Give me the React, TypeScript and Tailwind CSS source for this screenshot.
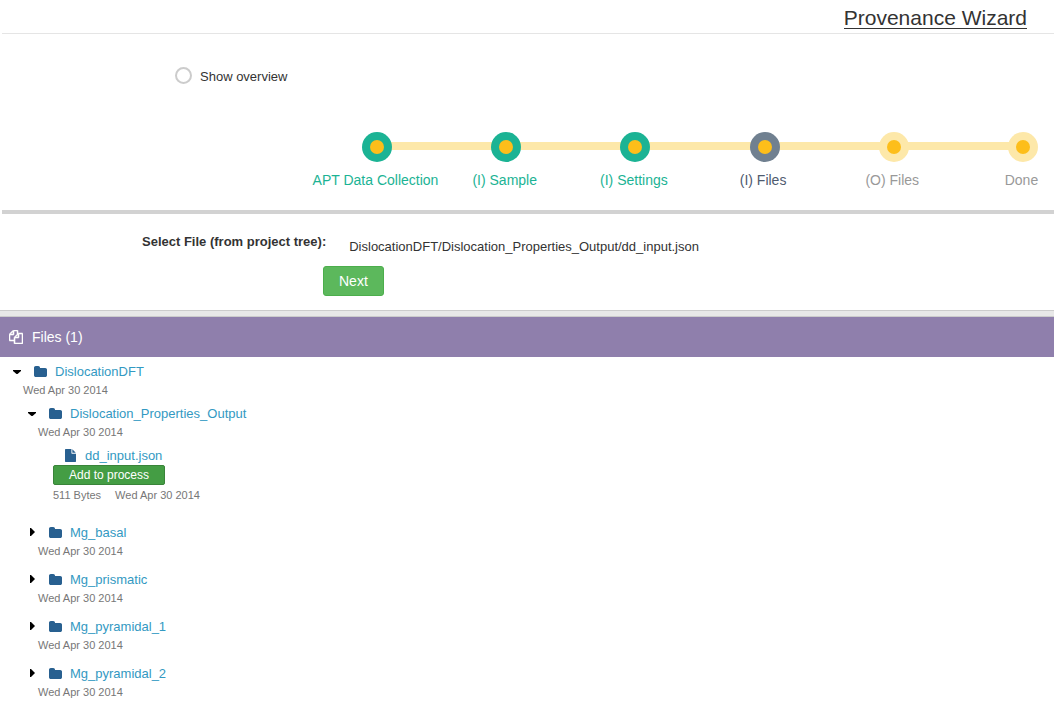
import { useState } from "react";

type StepState = "done" | "current" | "pending";

const steps: { label: string; state: StepState }[] = [
  { label: "APT Data Collection", state: "done" },
  { label: "(I) Sample", state: "done" },
  { label: "(I) Settings", state: "done" },
  { label: "(I) Files", state: "current" },
  { label: "(O) Files", state: "pending" },
  { label: "Done", state: "pending" },
];

const ring: Record<StepState, string> = {
  done: "bg-[#1bb394]",
  current: "bg-[#708090]",
  pending: "bg-[#fde8a9]",
};

const labelColor: Record<StepState, string> = {
  done: "text-[#1bb394]",
  current: "text-[#4f5b6f]",
  pending: "text-[#999999]",
};

const DATE = "Wed Apr 30 2014";

function FilesIcon() {
  return (
    <svg viewBox="0 0 1792 1792" className="size-[14px] fill-white stroke-white" strokeWidth="70" aria-hidden="true">
      <path d="M1696 384q40 0 68 28t28 68v1216q0 40-28 68t-68 28h-960q-40 0-68-28t-28-68v-288h-544q-40 0-68-28t-28-68v-672q0-40 20-88t48-76l408-408q28-28 76-48t88-20h416q40 0 68 28t28 68v328q68-40 128-40h416zm-544 213l-299 299h299v-299zm-640-384l-299 299h299v-299zm196 647l316-316v-416h-384v416q0 40-28 68t-68 28h-416v640h512v-256q0-40 20-88t48-76zm956 804v-1152h-384v416q0 40-28 68t-68 28h-416v640h896z" />
    </svg>
  );
}

function FolderIcon() {
  return (
    <svg viewBox="64 128 1664 1408" className="h-[11px] w-[13px] fill-[#286090]" aria-hidden="true">
      <path d="M1728 608v704q0 92-66 158t-158 66h-1216q-92 0-158-66t-66-158v-960q0-92 66-158t158-66h320q92 0 158 66t66 158v32h672q92 0 158 66t66 158z" />
    </svg>
  );
}

function FileIcon() {
  return (
    <svg viewBox="128 0 1536 1792" className="h-[13px] w-[11px] fill-[#286090]" aria-hidden="true">
      <path d="M1152 512v-472q22 14 36 28l408 408q14 14 28 36h-472zm-128 32q0 40 28 68t68 28h544v1056q0 40-28 68t-68 28h-1344q-40 0-68-28t-28-68v-1600q0-40 28-68t68-28h800v544z" />
    </svg>
  );
}

function Caret({ open }: { open: boolean }) {
  return (
    <svg viewBox="0 0 10 10" className="size-[10px] fill-black" aria-hidden="true">
      {open ? <path d="M1 4h8v1L5.500 8h-1L1 5z" /> : <path d="M3 1h1l3.500 3.500v1L4 9H3z" />}
    </svg>
  );
}

function FolderRow({ name, open = false }: { name: string; open?: boolean }) {
  return (
    <div>
      <div className="flex h-5 items-center">
        <button type="button" aria-label={name} aria-expanded={open} className="mr-3 flex">
          <Caret open={open} />
        </button>
        <FolderIcon />
        <a href="#" className="ml-2 pt-0.5 text-[13px] leading-5 text-[#3399c2]">
          {name}
        </a>
      </div>
      <p className="pl-[11px] text-[11px] leading-[18px] text-[#777777]">{DATE}</p>
    </div>
  );
}

export default function App() {
  const [overview, setOverview] = useState(false);
  return (
    <div className="bg-white font-['Liberation_Sans',Arial,sans-serif] text-[13px] text-[#333333]">
      <header className="ml-0.5 flex h-[34px] justify-end border-b border-[#e5e5e5] pt-1.5 pr-[27px]">
        <h1 className="h-[23px] border-b border-[#333333] text-[21px] leading-6">Provenance Wizard</h1>
      </header>

      <main>
        <label className="flex w-fit items-center gap-2 pt-[29px] pl-[175px] leading-5">
          <input
            type="checkbox"
            checked={overview}
            onChange={(e) => setOverview(e.target.checked)}
            className="size-[17px] appearance-none rounded-full border-2 border-[#cccccc] checked:bg-[#1bb394]"
          />
          <span className="pt-1">Show overview</span>
        </label>

        <div className="ml-0.5 border-b-4 border-[#d2d2d2] pt-[45px] pr-4 pb-5 pl-[360px]">
          <div className="relative">
            <div className="absolute inset-x-4 top-2.5 h-2 bg-[#fde8a9]" />
            <ol className="relative flex justify-between">
              {steps.map((s) => (
                <li key={s.label} className="flex w-[30px] flex-col items-center gap-2">
                  <span className={`flex size-[30px] items-center justify-center rounded-full ${ring[s.state]}`}>
                    <span className="size-[14px] rounded-full bg-[#fdbe1a]" />
                  </span>
                  <span className={`pr-[3px] text-sm whitespace-nowrap ${labelColor[s.state]}`}>{s.label}</span>
                </li>
              ))}
            </ol>
          </div>
        </div>

        <section className="pt-[18px] pb-3.5">
          <div className="flex gap-[23px] pl-[142px] leading-5">
            <span className="font-bold">Select File (from project tree):</span>
            <span className="pt-[5px]">DislocationDFT/Dislocation_Properties_Output/dd_input.json</span>
          </div>
          <button
            type="button"
            className="mt-[9px] ml-[323px] h-[30px] rounded-[3px] border border-[#4cae4c] bg-[#5cb85c] px-[15px] text-sm text-white"
          >
            Next
          </button>
        </section>

        <div className="h-[7px] border-y border-[#cccccc] bg-[#e8e8e8]" />

        <h2 className="flex h-10 items-center gap-[9px] bg-[#8f7fac] pl-[9px] text-sm text-white">
          <FilesIcon />
          Files (1)
        </h2>

        <div className="pt-1 pl-3">
          <FolderRow name="DislocationDFT" open />
          <div className="pt-1 pl-[15px]">
            <FolderRow name="Dislocation_Properties_Output" open />
            <div className="pt-1 pb-[18px] pl-[26px]">
              <div className="flex h-5 items-center gap-[9px] pl-3">
                <FileIcon />
                <a href="#" className="pt-0.5 text-[13px] leading-5 text-[#3399c2]">
                  dd_input.json
                </a>
              </div>
              <button
                type="button"
                className="flex h-5 items-center rounded-[2px] border border-[#398439] bg-[#449d44] px-[15px] text-xs text-white"
              >
                Add to process
              </button>
              <p className="flex gap-[14px] pt-px text-[11px] leading-[18px] text-[#777777]">
                <span>511 Bytes</span>
                <span>{DATE}</span>
              </p>
            </div>
            <div className="flex flex-col gap-[9px]">
              <FolderRow name="Mg_basal" />
              <FolderRow name="Mg_prismatic" />
              <FolderRow name="Mg_pyramidal_1" />
              <FolderRow name="Mg_pyramidal_2" />
            </div>
          </div>
        </div>
      </main>
    </div>
  );
}
